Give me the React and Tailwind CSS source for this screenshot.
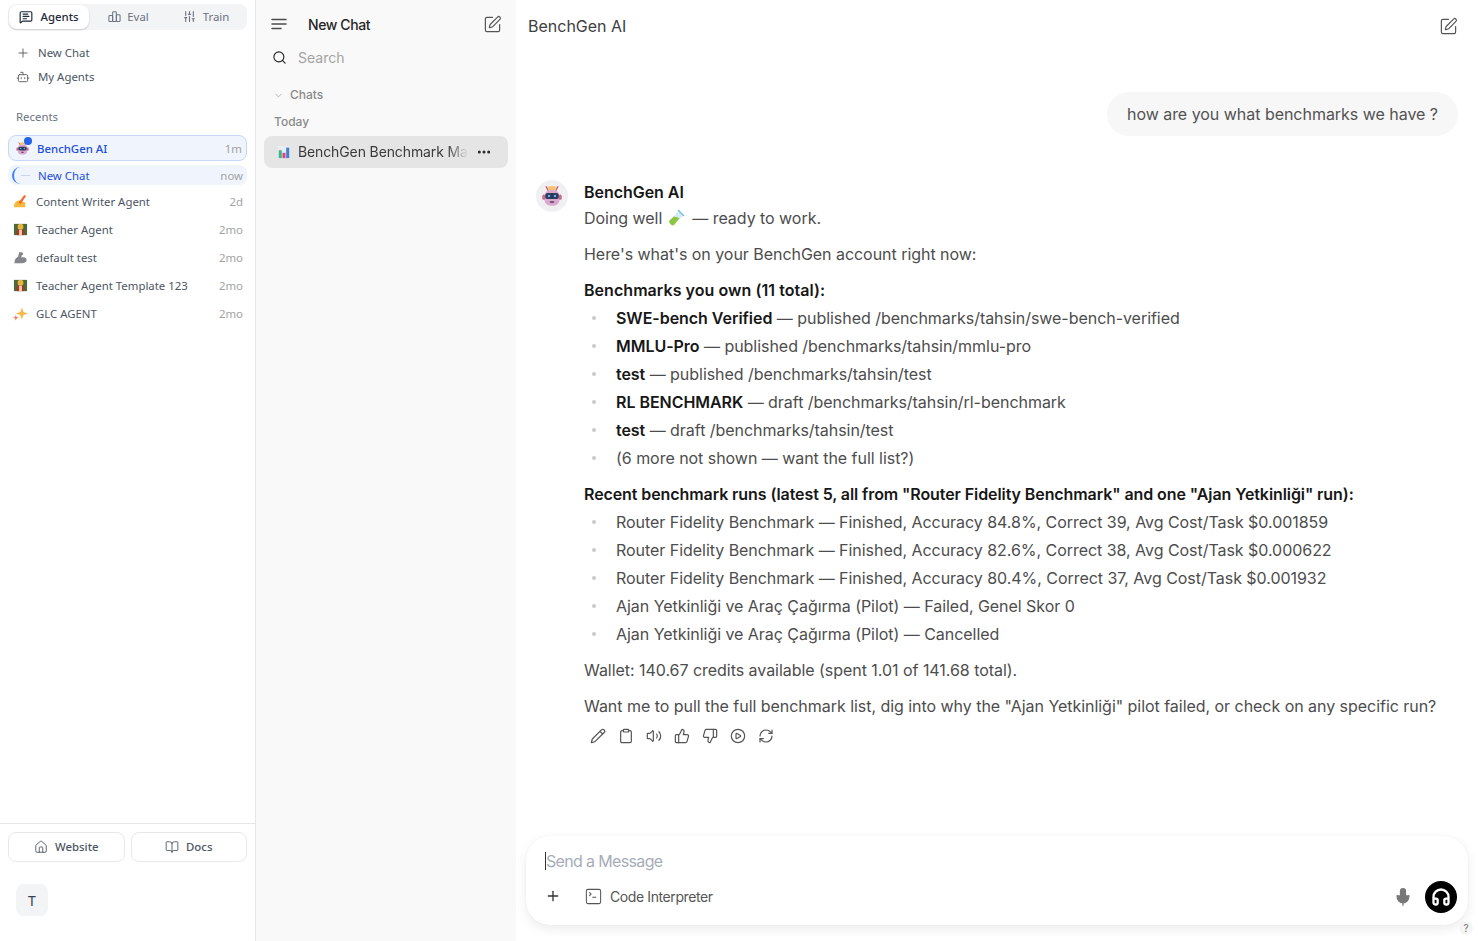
import React from "react";
import { Plus, Bot, MessageSquareText, Search, ChevronDown, Ellipsis, SquarePen, Pencil, Clipboard, Volume2, ThumbsUp, ThumbsDown, CirclePlay, RefreshCw, House, BookOpen, SquareTerminal, Mic, Headphones, SlidersVertical } from "lucide-react";

const RobotFace = ({ s = 16 }) => (
  <svg width={s} height={s} viewBox="0 0 32 32">
    <path d="M8 3l3 6M24 3l-3 6" stroke="#d65a7a" strokeWidth="2" />
    <rect x="11" y="3" width="10" height="5" rx="1" fill="#f1c36b" />
    <rect x="6" y="8" width="20" height="21" rx="8" fill="#d9a9cf" />
    <rect x="3" y="14" width="4" height="7" rx="2" fill="#c86a90" />
    <rect x="25" y="14" width="4" height="7" rx="2" fill="#c86a90" />
    <rect x="7" y="12" width="18" height="8" rx="3.5" fill="#2b3a58" />
    <circle cx="12" cy="16" r="1.6" fill="#6fb6ee" />
    <circle cx="20" cy="16" r="1.6" fill="#6fb6ee" />
    <rect x="13" y="23" width="6" height="2" rx="1" fill="#5a3a5a" />
  </svg>
);
const WriteEmoji = () => (
  <svg width="15" height="15" viewBox="0 0 16 16">
    <path d="M1 14c0-5 3-7 6-7l6 2v5z" fill="#f6b73c" />
    <path d="M6 9l6-8 2 1-6 9z" fill="#ef6c2f" />
  </svg>
);
const TeacherEmoji = () => (
  <svg width="15" height="15" viewBox="0 0 16 16">
    <rect x="1" y="2" width="14" height="12" fill="#4b6a3a" />
    <rect x="5" y="2" width="6" height="6" rx="2" fill="#e9b23c" />
    <rect x="4" y="8" width="8" height="6" fill="#a8352e" />
    <rect x="6.5" y="8" width="3" height="6" fill="#f2d3a0" />
  </svg>
);
const MuscleEmoji = () => (
  <svg width="15" height="15" viewBox="0 0 16 16">
    <path d="M1.500 14c0-4 2-6 4-7l1-4.500h3.500l1 2-2 1.500v2c3-1 5.500 0 5.500 3 0 2-2 3-5 3z" fill="#85858c" />
  </svg>
);
const SparkEmoji = () => (
  <svg width="15" height="15" viewBox="0 0 16 16">
    <path d="M9.500 1.500l1.700 4.800L16 8l-4.800 1.700L9.500 14.500 7.800 9.700 3 8l4.800-1.700z" fill="#f9b84a" />
    <path d="M3 9.500l.9 2.100 2.100.9-2.100.9L3 15.500l-.9-2.100-2.100-.9 2.100-.9z" fill="#f47c5c" />
  </svg>
);
const ChartEmoji = () => (
  <svg width="14" height="14" viewBox="0 0 16 16">
    <rect x="1" y="1" width="14" height="14" fill="#e9edf2" />
    <rect x="2" y="6" width="3.500" height="9" fill="#3fb58b" />
    <rect x="6.250" y="9" width="3.500" height="6" fill="#e0457b" />
    <rect x="10.500" y="3" width="3.500" height="12" fill="#3f7fd6" />
  </svg>
);
const TubeEmoji = () => (
  <svg width="18" height="18" viewBox="0 0 18 18">
    <path d="M12 1.500l4.500 4.500-9.500 10c-2 1.500-6-2.500-4.500-4.500z" fill="#d6ecf4" />
    <path d="M7 7.500l5.500 1.500-5.500 7c-2 1.500-6-2.500-4.500-4.500z" fill="#8cc63f" />
    <path d="M11 1l6 6" stroke="#7cc4dd" strokeWidth="1.600" />
  </svg>
);

const recents = [
  [<WriteEmoji />, "Content Writer Agent", "2d"],
  [<TeacherEmoji />, "Teacher Agent", "2mo"],
  [<MuscleEmoji />, "default test", "2mo"],
  [<TeacherEmoji />, "Teacher Agent Template 123", "2mo"],
  [<SparkEmoji />, "GLC AGENT", "2mo"],
];

const owned = [
  ["SWE-bench Verified", " — published /benchmarks/tahsin/swe-bench-verified"],
  ["MMLU-Pro", " — published /benchmarks/tahsin/mmlu-pro"],
  ["test", " — published /benchmarks/tahsin/test"],
  ["RL BENCHMARK", " — draft /benchmarks/tahsin/rl-benchmark"],
  ["test", " — draft /benchmarks/tahsin/test"],
  ["", "(6 more not shown — want the full list?)"],
];
const runs = [
  "Router Fidelity Benchmark — Finished, Accuracy 84.8%, Correct 39, Avg Cost/Task $0.001859",
  "Router Fidelity Benchmark — Finished, Accuracy 82.6%, Correct 38, Avg Cost/Task $0.000622",
  "Router Fidelity Benchmark — Finished, Accuracy 80.4%, Correct 37, Avg Cost/Task $0.001932",
  "Ajan Yetkinliği ve Araç Çağırma (Pilot) — Failed, Genel Skor 0",
  "Ajan Yetkinliği ve Araç Çağırma (Pilot) — Cancelled",
];

const Bullets = ({ items }) => (
  <ul className="flex flex-col">
    {items.map((it, i) => (
      <li key={i} className="flex h-7 items-center">
        <span className="ml-[8px] mr-[20px] h-[4px] w-[4px] rounded-full bg-[#c9c9c9]" />
        <span>{it}</span>
      </li>
    ))}
  </ul>
);

const Footer = ({ icon, label }) => (
  <div className="flex h-[30px] flex-1 items-center justify-center gap-[7px] rounded-lg border border-[#e8e8e8] font-medium text-[#4b5563]">
    {icon}
    {label}
  </div>
);

export default function App() {
  return (
    <div className="flex h-[941px] w-[1478px] overflow-hidden bg-white font-['Inter',sans-serif] text-[#4d4d4d]">
      <aside className="flex w-[256px] shrink-0 flex-col border-r border-[#e5e7eb] font-['Noto_Sans',sans-serif] text-[11.4px]">
        <div className="px-2 pt-1">
          <div className="flex h-[26px] items-center rounded-lg bg-[#f3f4f6] p-[1px] text-[#6b7280]">
            <div className="flex h-[24px] w-[80px] items-center justify-center gap-[7px] rounded-lg bg-white font-medium text-[#1f2937] shadow-[0_1px_2px_rgba(0,0,0,0.18)]">
              <MessageSquareText size={14} />
              Agents
            </div>
            <div className="flex w-[79px] items-center justify-center gap-[6px]">
              <svg width="13" height="13" viewBox="0 0 14 14" fill="none" stroke="currentColor" strokeWidth="1.100"><rect x="1" y="6" width="4" height="6.500" rx="1" /><rect x="5" y="2" width="4" height="10.500" rx="1" /><rect x="9" y="5" width="4" height="7.500" rx="1" /></svg>
              Eval
            </div>
            <div className="flex w-[76px] items-center justify-center gap-[7px]">
              <SlidersVertical size={13} />
              Train
            </div>
          </div>
        </div>
        <div className="mt-[11px] flex flex-col px-4 text-[#4b5563]">
          <div className="flex h-6 items-center gap-[8px]">
            <Plus size={14} strokeWidth={1.500} className="text-[#555]" />
            New Chat
          </div>
          <div className="flex h-6 items-center gap-[8px]">
            <Bot size={14} strokeWidth={1.500} className="text-[#555]" />
            My Agents
          </div>
        </div>
        <div className="mt-[19px] px-4 text-[#6b7280]">Recents</div>
        <div className="mt-[10px] flex flex-col px-2">
          <div className="relative flex h-[26px] items-center justify-between rounded-lg border border-[#c7d7f5] bg-[#eff4fd] pl-[6px] pr-[4px]">
            <div className="flex items-center gap-[7px] font-medium text-[#1d4ed8]">
              <RobotFace s={15} />
              BenchGen AI
            </div>
            <span className="text-[#a3a3a3]">1m</span>
            <span className="absolute left-[15px] top-[1px] h-[8px] w-[8px] rounded-full bg-[#2563eb]" />
          </div>
          <div className="mt-[4px] flex h-[20px] items-center justify-between rounded-lg bg-[#eff4fd] pl-[4px] pr-[4px]">
            <div className="flex items-center text-[#1d4ed8]">
              <span className="h-[17px] w-[12px] rounded-l-full border-l-2 border-[#3b82f6]" />
              <span className="-ml-[3px] mr-[8px] h-[1px] w-[9px] bg-[#c9d5ea]" />
              New Chat
            </div>
            <span className="text-[#a3a3a3]">now</span>
          </div>
          {recents.map(([icon, name, t], i) => (
            <div key={i} className={`flex h-7 items-center justify-between pl-[5px] pr-[4px] ${i === 0 ? "mt-[2px]" : ""}`}>
              <div className="flex items-center gap-[8px] text-[#4b5563]">
                {icon}
                {name}
              </div>
              <span className="text-[#a3a3a3]">{t}</span>
            </div>
          ))}
        </div>
        <div className="mt-auto border-t border-[#e5e7eb] px-2 pt-2">
          <div className="flex gap-[6px]">
            <Footer icon={<House size={14} strokeWidth={1.500} />} label="Website" />
            <Footer icon={<BookOpen size={14} strokeWidth={1.500} />} label="Docs" />
          </div>
          <div className="mb-[25px] ml-2 mt-[22px] flex h-8 w-8 items-center justify-center rounded-lg bg-[#f3f4f6] text-[14px] text-[#374151]">T</div>
        </div>
      </aside>

      <nav className="flex w-[260px] shrink-0 flex-col bg-[#f9f9f9] px-2 text-[14px]">
        <div className="mt-[12px] flex h-[24px] items-center pl-[7px] pr-[6px]">
          <svg width="16" height="12" viewBox="0 0 16 12" fill="none" stroke="#4b4b4b" strokeWidth="1.500" strokeLinecap="round"><path d="M1 1.500h14M1 6h14M1 10.500h9" /></svg>
          <span className="ml-[21px] font-medium tracking-[-0.4px] text-[#262626]">New Chat</span>
          <SquarePen size={19} strokeWidth={1.500} className="ml-auto text-[#555]" />
        </div>
        <div className="mt-[9px] flex h-[24px] items-center pl-[8px] text-[#a3a3a3]">
          <Search size={15} strokeWidth={1.800} className="text-[#222]" />
          <span className="ml-[11px]">Search</span>
        </div>
        <div className="mt-[16px] flex h-[20px] items-center pl-[9px] text-[12px] text-[#8a8a8a]">
          <ChevronDown size={11} className="text-[#b0b0b0]" />
          <span className="ml-[6px] font-medium">Chats</span>
        </div>
        <div className="mt-[7px] h-[20px] pl-[10px] text-[12px] font-medium leading-[20px] text-[#8a8a8a]">Today</div>
        <div className="mt-[4px] flex h-[32px] items-center rounded-lg bg-[#e5e5e5] pl-[13px] pr-[16px] text-[#3a3a3a]">
          <ChartEmoji />
          <span className="ml-[7px] whitespace-nowrap pb-[1px] tracking-[-0.12px] [mask-image:linear-gradient(to_right,black_88%,transparent)]">BenchGen Benchmark Ma</span>
          <Ellipsis size={16} strokeWidth={2.500} className="ml-auto text-[#262626]" />
        </div>
      </nav>

      <main className="flex min-w-0 flex-1 flex-col pl-[11px] pr-[10px]">
        <header className="flex h-[52px] shrink-0 items-center justify-between pl-[1px] text-[16px]">
          <span className="text-[#404040]">BenchGen AI</span>
          <SquarePen size={19} strokeWidth={1.500} className="mr-[10px] text-[#555]" />
        </header>
        <div className="mt-[40px] flex justify-end pr-[10px]">
          <div className="flex h-[44px] items-center rounded-[22px] bg-[#f7f7f7] px-5 text-[16px] tracking-[-0.03px] text-[#525252]">how are you what benchmarks we have ?</div>
        </div>
        <div className="mt-[44px] flex text-[16px] leading-[24px] tracking-[-0.04px]">
          <div className="ml-[9px] mr-[16px] flex h-[32px] w-[32px] shrink-0 items-center justify-center rounded-full bg-[#f0eff1]">
            <RobotFace s={24} />
          </div>
          <div className="flex min-w-0 flex-col">
            <div className="h-[24px] font-semibold text-[#171717]">BenchGen AI</div>
            <div className="flex h-[28px] items-center">Doing well<span className="ml-[5px] mr-[7px]"><TubeEmoji /></span>— ready to work.</div>
            <p className="mt-[8px] flex h-[28px] items-center">Here's what's on your BenchGen account right now:</p>
            <p className="mt-[8px] flex h-[28px] items-center font-semibold tracking-[0.05px] text-[#171717]">Benchmarks you own (11 total):</p>
            <Bullets items={owned.map(([b, r], i) => <span key={i}><b className="font-semibold text-[#171717]">{b}</b>{r}</span>)} />
            <p className="mt-[8px] flex h-[28px] items-center whitespace-nowrap font-semibold tracking-[-0.09px] text-[#171717]">Recent benchmark runs (latest 5, all from "Router Fidelity Benchmark" and one "Ajan Yetkinliği" run):</p>
            <Bullets items={runs} />
            <p className="mt-[8px] flex h-[28px] items-center">Wallet: 140.67 credits available (spent 1.01 of 141.68 total).</p>
            <p className="mt-[8px] flex h-[28px] items-center whitespace-nowrap">Want me to pull the full benchmark list, dig into why the "Ajan Yetkinliği" pilot failed, or check on any specific run?</p>
            <div className="mt-[2px] flex h-[28px] items-center gap-[12px] pl-[6px] text-[#555]">
              <Pencil size={16} strokeWidth={1.800} />
              <Clipboard size={16} strokeWidth={1.800} />
              <Volume2 size={16} strokeWidth={1.800} />
              <ThumbsUp size={16} strokeWidth={1.800} />
              <ThumbsDown size={16} strokeWidth={1.800} />
              <CirclePlay size={16} strokeWidth={1.800} />
              <RefreshCw size={16} strokeWidth={1.800} />
            </div>
          </div>
        </div>
        <div className="mb-[16px] -ml-[1px] mt-auto flex h-[89px] flex-col rounded-[24px] bg-white pl-[19px] pr-[11px] shadow-[0_4px_12px_rgba(0,0,0,0.08),0_0_1px_rgba(0,0,0,0.08)]">
          <div className="mt-[14px] flex h-[22px] items-center text-[16px] tracking-[-0.65px] text-[#a6adb8]">
            <span className="h-[18px] w-[1px] bg-[#333]" />
            Send a Message
          </div>
          <div className="mt-[9px] flex items-center">
            <Plus size={16} strokeWidth={2} className="-mt-[2px] text-[#333]" />
            <div className="-mt-[2px] ml-[23px] flex items-center gap-[7px] text-[14px] tracking-[-0.4px] text-[#555]">
              <SquareTerminal size={19} strokeWidth={1.300} />
              Code Interpreter
            </div>
            <Mic size={20} fill="#777" strokeWidth={1.500} className="ml-auto mr-[12px] text-[#777]" />
            <div className="flex h-[32px] w-[32px] items-center justify-center rounded-full bg-black text-white">
              <Headphones size={20} strokeWidth={2.800} />
            </div>
          </div>
        </div>
      </main>
      <span className="absolute left-[1459px] top-[921px] flex h-[14px] w-[14px] items-center justify-center rounded-full bg-[#f5f5f5] font-['Inter',sans-serif] text-[10px] text-[#777]">?</span>
    </div>
  );
}
